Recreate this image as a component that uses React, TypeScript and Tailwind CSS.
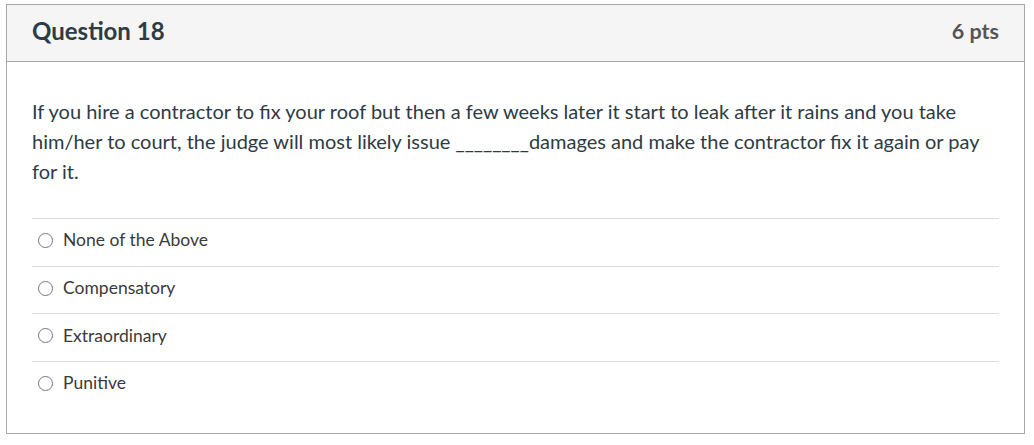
import React from "react";

const options = ["None of the Above", "Compensatory", "Extraordinary", "Punitive"];

export default function App() {
  return (
    <div className="w-[1034px] h-[445px] bg-white pt-[4px] pl-[6px]" style={{ fontFamily: "Lato, 'Noto Sans', sans-serif" }}>
      <div className="w-[1019px] h-[430px] border border-[#a8a8a8] flex flex-col">
        <div className="h-[57px] bg-[#f5f5f5] border-b border-[#a8a8a8] flex items-center justify-between px-[25px] pb-[4px]">
          <div className="text-[24px] font-bold text-[#2d3b45]">Question 18</div>
          <div className="text-[21.5px] font-bold text-[#555]">6 pts</div>
        </div>
        <div className="px-[25px] pt-[34px]">
          <p className="text-[20px] leading-[30px] text-[#2d3b45]">
            If you hire a contractor to fix your roof but then a few weeks later it start to leak after it rains and you take him/her to court, the judge will most likely issue ________damages and make the contractor fix it again or pay for it.
          </p>
          <div className="mt-[32px]">
            {options.map((o) => (
              <div key={o} className="h-[47.7px] border-t border-[#dcdcdc] flex items-center pl-[6px] gap-[10px] pb-[4px]">
                <span className="w-[15px] h-[15px] rounded-full border border-[#777] bg-white inline-block" />
                <span className="text-[17.5px] text-[#3a3a3a]">{o}</span>
              </div>
            ))}
          </div>
        </div>
      </div>
    </div>
  );
}
